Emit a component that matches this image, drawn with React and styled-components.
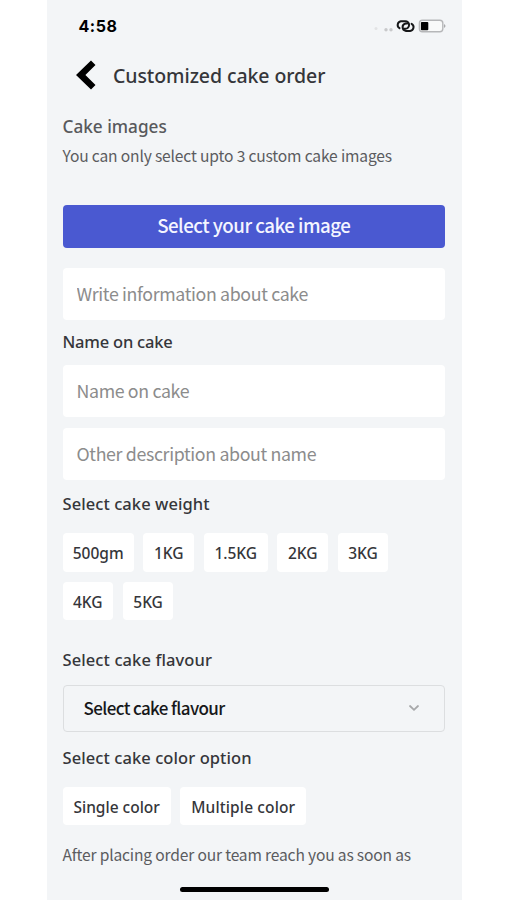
import React from "react";
import styled, { createGlobalStyle } from "styled-components";

const Global = createGlobalStyle`
  * { box-sizing: border-box; }
  body { margin: 0; background: #fff; }
  button, input { font: inherit; margin: 0; border: 0; }
`;
const sans = `"Noto Sans CJK SC", "Noto Sans", sans-serif`;
const display = `"Noto Sans", "Open Sans", sans-serif`;

const Screen = styled.main`
  display: flex;
  flex-direction: column;
  width: 414.5px;
  height: 900px;
  margin-left: 47px;
  padding: 0 16.5px 0 15.5px;
  overflow: hidden;
  background: #f3f5f7;
  font-family: ${sans};
  color: #35363a;
`;
const StatusBar = styled.div`
  display: flex;
  align-items: center;
  height: 51px;
  padding-left: 16px;
`;
const Time = styled.span`
  flex: 1;
  font: 700 16px/20px Inter, sans-serif;
  letter-spacing: 0.5px;
  color: #000;
`;
const StatusIcons = styled.svg`
  width: 72px;
  height: 20px;
  margin-right: -0.5px;
`;
const Header = styled.header`
  display: flex;
  align-items: center;
  height: 49px;
  margin-bottom: 15px;
  padding-left: 13px;
`;
const BackButton = styled.button`
  display: flex;
  width: 37.5px;
  padding: 0 0 1px;
  background: none;
`;
const Line = styled.div`
  flex: none;
  white-space: nowrap;
  letter-spacing: ${(p) => p.$track || 0}px;
`;
const Title = styled(Line).attrs({ as: "h1" })`
  margin: 0;
  font: 500 19.5px/28px ${display};
`;
const Label = styled(Line).attrs({ as: "h2" })`
  height: 24px;
  margin: ${(p) => p.$top || 0}px 0 ${(p) => p.$bottom || 0}px;
  font: 500 ${(p) => p.$size || 16.5}px/24px ${display};
  color: ${(p) => (p.$soft ? "#58595c" : "#35363a")};
`;
const Note = styled(Line)`
  height: 24px;
  margin-top: ${(p) => p.$top || 0}px;
  font-size: 15.6px;
  line-height: 24px;
  color: #5b5c5f;
`;
const PrimaryButton = styled.button`
  flex: none;
  height: 43px;
  margin: 38px 0 20px;
  padding: 0 0 3px;
  border-radius: 4px;
  background: #4a59d1;
  color: #f4f5ff;
  font-size: 18.7px;
  font-weight: 500;
  line-height: 40px;
  letter-spacing: ${(p) => p.$track || 0}px;
`;
const Field = styled.input`
  flex: none;
  width: 100%;
  height: 52px;
  margin-bottom: ${(p) => p.$bottom || 0}px;
  padding: 0 14px 2px;
  border-radius: 4px;
  background: #fff;
  font-size: 17.8px;
  letter-spacing: -0.36px;
  &::placeholder { color: #8c8c8c; opacity: 1; }
`;
const Chips = styled.div`
  display: flex;
  flex: none;
  flex-wrap: wrap;
  gap: 10px 9.7px;
`;
const Chip = styled.button`
  width: ${(p) => p.$width}px;
  height: 38.5px;
  padding: 1px 0 0;
  border-radius: 4px;
  background: #fff;
  color: #35363a;
  font: 500 15.5px/38px ${display};
  letter-spacing: ${(p) => p.$track || 0}px;
  white-space: nowrap;
`;
const Select = styled.button`
  display: flex;
  flex: none;
  align-items: center;
  justify-content: space-between;
  height: 47px;
  padding: 0 24.5px 0 20px;
  border: 1px solid #dcdee0;
  border-radius: 4px;
  background: transparent;
  color: #17181a;
  font-size: 17px;
  font-weight: 500;
  letter-spacing: -0.62px;
`;
const SelectText = styled.span`
  padding-bottom: 2px;
`;
const HomeIndicator = styled.div`
  flex: none;
  width: 149px;
  height: 5px;
  margin: 21px 0 0 117px;
  border-radius: 3px;
  background: #000;
`;

const weights = [
  ["500gm", 71.3], ["1KG", 50.6], ["1.5KG", 64], ["2KG", 50.6], ["3KG", 50.6], ["4KG", 50.6], ["5KG", 50.6],
];

export default function App() {
  return (
    <>
      <Global />
      <Screen>
        <StatusBar>
          <Time>4:58</Time>
          <StatusIcons viewBox="0 0 72 20" aria-hidden="true">
            <circle cx="2" cy="12.5" r="1.5" fill="#e2e3e5" />
            <circle cx="12" cy="13.8" r="1.7" fill="#c8c9cb" />
            <circle cx="17" cy="13.8" r="1.7" fill="#c8c9cb" />
            <g fill="none" stroke="#161719" strokeWidth="2" strokeLinecap="round">
              <path d="M25.5 12.2A3.8 3.8 0 0 1 26.9 5.2H31.2A3.8 3.8 0 0 1 31.4 12.8H29.8" />
              <path d="M37.6 7.8A3.8 3.8 0 0 1 36.1 14.9H32A3.8 3.8 0 0 1 31.6 7.4H33.2" />
            </g>
            <rect x="45.4" y="4.2" width="23.4" height="11.6" rx="3" fill="#f9fafa" stroke="#b6b7b9" strokeWidth="1.4" />
            <rect x="46.9" y="5.9" width="7.4" height="8.4" rx="1" fill="#000" />
            <path d="M70 8v4c2-1 2-3 0-4Z" fill="#a9aaac" />
          </StatusIcons>
        </StatusBar>
        <Header>
          <BackButton aria-label="Back">
            <svg width="21" height="30" viewBox="0 0 21 30">
              <path d="M15 .5 19.5 5 9.4 15 19.5 25 15 29.6 0 15Z" fill="#000" />
            </svg>
          </BackButton>
          <Title $track={-0.08}>Customized cake order</Title>
        </Header>
        <Label $soft $bottom={3.5} $size={17.2}>Cake images</Label>
        <Note $track={-0.16}>You can only select upto 3 custom cake images</Note>
        <PrimaryButton $track={-0.5}>Select your cake image</PrimaryButton>
        <Field placeholder="Write information about cake" $bottom={10} />
        <Label $bottom={11.5} $track={-0.22}>Name on cake</Label>
        <Field placeholder="Name on cake" $bottom={10.5} />
        <Field placeholder="Other description about name" $bottom={12} />
        <Label $bottom={17.5} $track={0.07}>Select cake weight</Label>
        <Chips>
          {weights.map(([name, width]) => <Chip key={name} $width={width}>{name}</Chip>)}
        </Chips>
        <Label $top={28} $bottom={12.5} $track={0.1}>Select cake flavour</Label>
        <Select>
          <SelectText>Select cake flavour</SelectText>
          <svg width="12" height="8" viewBox="0 0 12 8">
            <path d="m2 2 4 3.8L10 2" fill="none" stroke="#a7a8aa" strokeWidth="1.8" strokeLinecap="round" />
          </svg>
        </Select>
        <Label $top={14} $bottom={17} $track={0.08}>Select cake color option</Label>
        <Chips>
          <Chip $width={108.3}>Single color</Chip>
          <Chip $width={125.5} $track={0.12}>Multiple color</Chip>
        </Chips>
        <Note $top={16.6} $track={-0.17}>After placing order our team reach you as soon as</Note>
        <HomeIndicator />
      </Screen>
    </>
  );
}
